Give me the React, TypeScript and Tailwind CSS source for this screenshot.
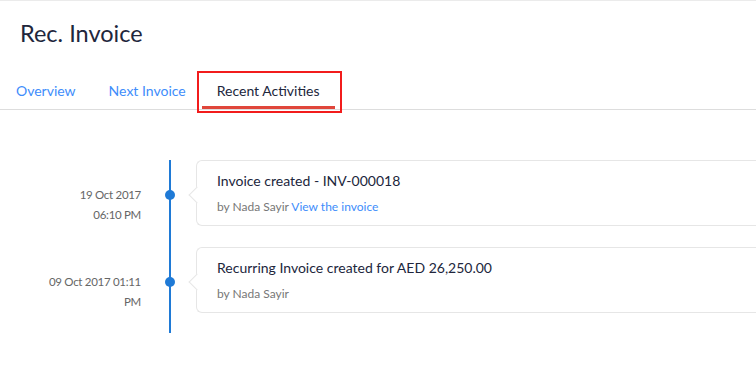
import React from 'react';

const activities = [
  {
    date: '19 Oct 2017',
    time: '06:10 PM',
    title: 'Invoice created - INV-000018',
    by: 'Nada Sayir',
    link: 'View the invoice',
  },
  {
    date: '09 Oct 2017 01:11',
    time: 'PM',
    title: 'Recurring Invoice created for AED 26,250.00',
    by: 'Nada Sayir',
    link: '',
  },
];

function Tab({ label, active }: { label: string; active?: boolean }) {
  if (active) {
    return (
      <div className="relative flex h-full items-center px-[15px]">
        <span className="text-[14px] text-[#21263c]">{label}</span>
        <div className="absolute bottom-0 left-0 right-0 h-[3px] bg-[#e0463b]" />
        <div className="pointer-events-none absolute -left-[5px] -right-[7px] top-[-1px] bottom-[-4px] border-2 border-[#f21c1c]" />
      </div>
    );
  }
  return (
    <div className="flex h-full items-center">
      <span className="text-[14px] text-[#408dfb]">{label}</span>
    </div>
  );
}

export default function App() {
  return (
    <div
      className="h-[365px] w-[756px] overflow-hidden border-t border-[#ebebeb] bg-white"
      style={{ fontFamily: 'Lato, "Open Sans", sans-serif' }}
    >
      <div className="pl-[20px] pt-[15px] text-[23.5px] leading-[34px] text-[#21263c]">Rec. Invoice</div>

      <div className="mt-[22px] flex h-[38px] items-stretch border-b border-[#dddddd] pl-[16px]">
        <div className="mr-[33px]">
          <Tab label="Overview" />
        </div>
        <div className="mr-[16px]">
          <Tab label="Next Invoice" />
        </div>
        <Tab label="Recent Activities" active />
      </div>

      <div className="relative mt-[50px]">
        <div className="absolute left-[169px] top-0 h-[173px] w-[2px] bg-[#1f7ad6]" />
        <div className="flex flex-col gap-[21px]">
          {activities.map((a) => (
            <div key={a.title} className="flex">
              <div className="w-[141px] pt-[25px] text-right text-[11.5px] leading-[20px] tracking-[-0.3px] text-[#666666]">
                <div>{a.date}</div>
                <div>{a.time}</div>
              </div>
              <div className="relative w-[55px]">
                <div className="absolute left-[24px] top-[30px] h-[10px] w-[10px] rounded-full bg-[#1f7ad6]" />
              </div>
              <div className="relative h-[66px] flex-1 rounded-l-[6px] border border-r-0 border-[#e6e6e6] bg-white pl-[20px] pt-[10px]">
                <div className="absolute left-[-6px] top-[28px] h-[12px] w-[12px] rotate-45 border-b border-l border-[#e6e6e6] bg-white" />
                <div className="text-[14px] leading-[20px] text-[#21263c]">{a.title}</div>
                <div className="mt-[7px] text-[12px] leading-[18px] text-[#777777]">
                  by {a.by}
                  {a.link && <span className="text-[#408dfb]"> {a.link}</span>}
                </div>
              </div>
            </div>
          ))}
        </div>
      </div>
    </div>
  );
}
